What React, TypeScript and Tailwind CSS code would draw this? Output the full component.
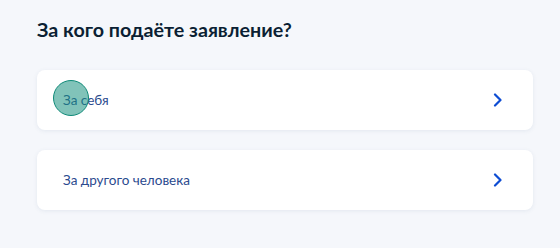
export default function App() {
  const options = [
    { id: "self", label: "За себя" },
    { id: "other", label: "За другого человека" },
  ];

  return (
    <div className="relative h-[248px] w-[560px] bg-[#f5f7fb] px-[37px] pt-[16px] font-['Lato','Noto_Sans',sans-serif]">
      <h1 className="text-[19.7px] font-bold leading-[28px] text-[#0b1f33]">
        За кого подаёте заявление?
      </h1>

      <div className="mt-[26px] flex flex-col gap-[20px]">
        {options.map((opt) => (
          <button
            key={opt.id}
            className="flex h-[60px] w-[496px] items-center justify-between rounded-[8px] bg-white pl-[26px] pr-[30px] text-left shadow-[0_1px_4px_rgba(102,122,153,0.12)]"
          >
            <span className="text-[13.5px] text-[#2b4a8e]">{opt.label}</span>
            <svg width="10" height="14" viewBox="0 0 10 14" fill="none">
              <path
                d="M2 1.5 L7.5 7 L2 12.5"
                stroke="#0d4cd3"
                strokeWidth="2.2"
                strokeLinecap="round"
                strokeLinejoin="round"
              />
            </svg>
          </button>
        ))}
      </div>

      {/* click marker */}
      <div className="pointer-events-none absolute left-[53px] top-[80px] h-[36px] w-[36px] rounded-full border-[1.5px] border-[#0f8a78] bg-[#19917f]/55" />
    </div>
  );
}
